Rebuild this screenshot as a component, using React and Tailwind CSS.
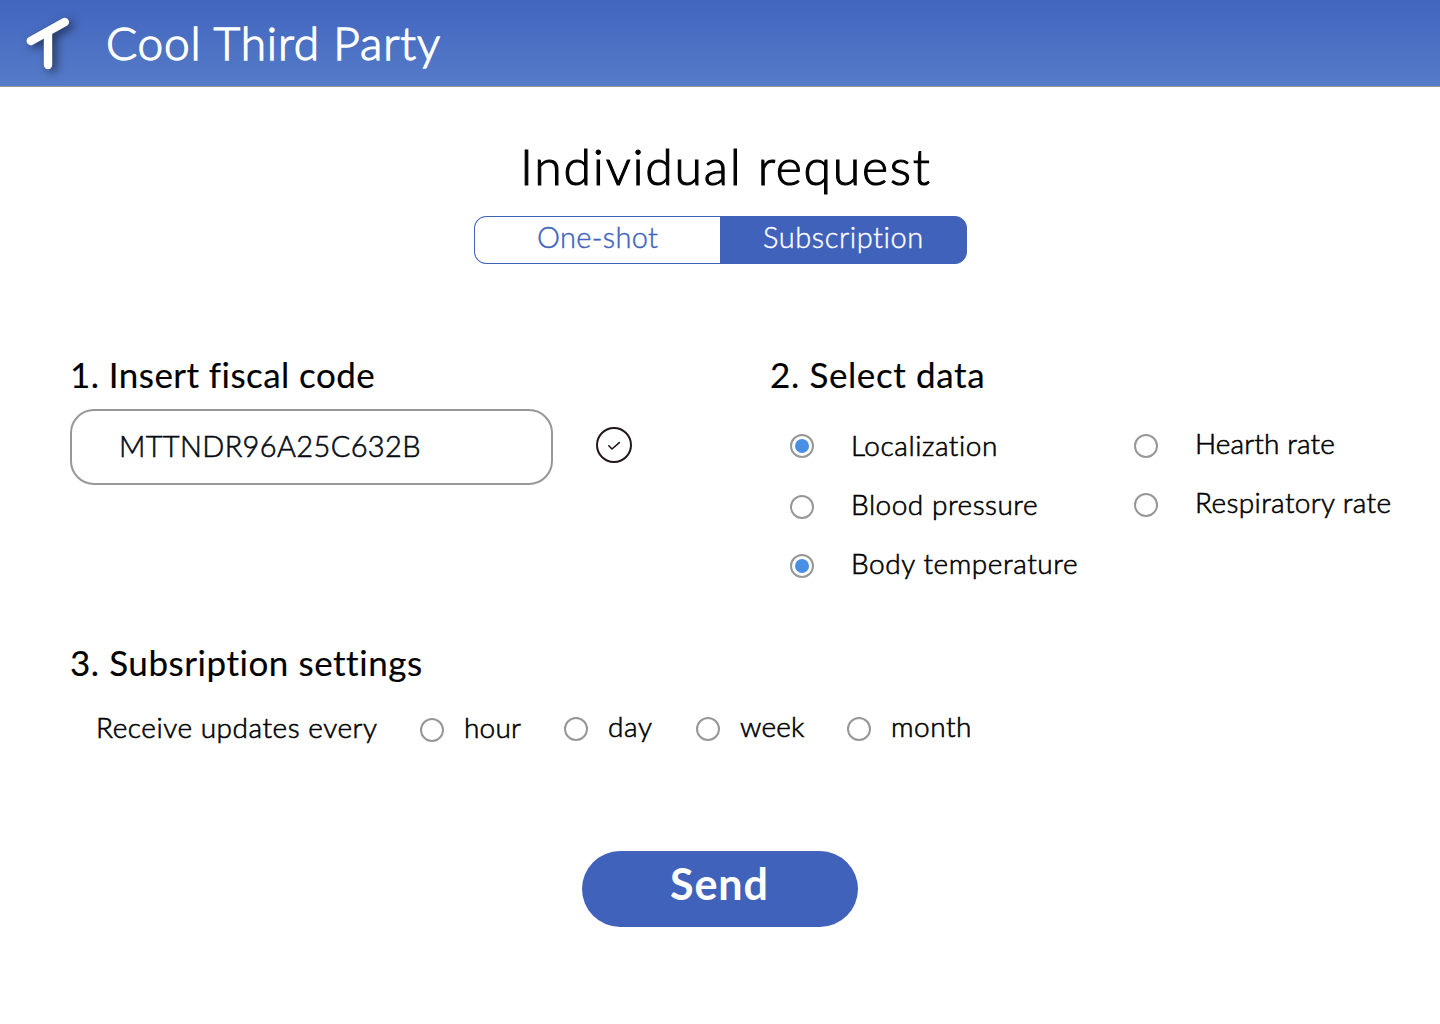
import React from "react";

function Radio({ checked = false, className = "" }) {
  return (
    <span
      role="radio"
      aria-checked={checked}
      className={`flex size-6 shrink-0 items-center justify-center rounded-full border-2 border-[#979797] bg-white ${className}`}
    >
      {checked && <span className="size-[14px] rounded-full bg-[#4a90e2]" />}
    </span>
  );
}

const bodyText =
  "whitespace-nowrap text-[28px] leading-[30px] font-light [-webkit-text-stroke:0.6px_currentColor]";
const headingText =
  "h-[35px] whitespace-nowrap text-[35px] leading-[37px] font-normal [-webkit-text-stroke:0.15px_currentColor]";

const leftOptions = [
  { label: "Localization", checked: true, offset: "mt-1", spacing: "tracking-[0.558px]" },
  { label: "Blood pressure", checked: false, offset: "mt-1.5", spacing: "tracking-[0.515px]" },
  { label: "Body temperature", checked: true, offset: "mt-1.5", spacing: "tracking-[0.579px]" },
];

const rightOptions = [
  { label: "Hearth rate", checked: false, offset: "mt-1.5", spacing: "tracking-[0.14px]" },
  { label: "Respiratory rate", checked: false, offset: "mt-1.5", spacing: "tracking-[0.37px]" },
];

const intervals = [
  { label: "hour", width: "w-[144px]", textOffset: "mt-0", offset: "mt-1.5", spacing: "tracking-[0.196px]" },
  { label: "day", width: "w-[132px]", textOffset: "-mt-px", offset: "mt-[5px]", spacing: "tracking-[0.635px]" },
  { label: "week", width: "w-[151px]", textOffset: "-mt-px", offset: "mt-[5px]", spacing: "tracking-[0.185px]" },
  { label: "month", width: "w-[140px]", textOffset: "-mt-px", offset: "mt-[5px]", spacing: "tracking-[0.506px]" },
];

function OptionList({ options }) {
  return (
    <div>
      {options.map((o) => (
        <div key={o.label} className="flex h-[59px] items-start gap-[37px]">
          <Radio checked={o.checked} className={o.offset} />
          <span className={`${bodyText} ${o.spacing}`}>{o.label}</span>
        </div>
      ))}
    </div>
  );
}

export default function App() {
  return (
    <div className="h-[1024px] w-[1440px] overflow-hidden bg-white font-[Lato,sans-serif] text-black">
      <header className="flex h-[87px] items-start border-b border-[#979797] bg-linear-to-b from-[#4265be] to-[#567bc8]">
        <svg className="h-[86px] w-[106px] shrink-0" viewBox="0 0 106 86" fill="none">
          <g
            stroke="#fff"
            strokeWidth="8.4"
            strokeLinecap="round"
            className="drop-shadow-[4px_3px_5px_rgba(0,0,0,0.55)]"
          >
            <path d="M30.8 41 64.8 22" />
            <path d="M48 34V65" />
          </g>
        </svg>
        <span className="mt-5 text-[46px] leading-[46px] font-light tracking-[0.86px] whitespace-nowrap text-white [-webkit-text-stroke:1.3px_currentColor]">
          Cool Third Party
        </span>
      </header>

      <main>
        <h1 className="mt-[54px] ml-[520px] h-[49px] text-[50px] leading-[50px] font-light tracking-[1.72px] whitespace-nowrap [-webkit-text-stroke:1.1px_currentColor]">
          Individual request
        </h1>

        <div className="mt-[26px] ml-[474px] flex h-12 w-[493px] overflow-hidden rounded-xl border border-[#4062bb] bg-[#4062bb] text-[29px] leading-[29px] font-light [-webkit-text-stroke:0.4px_currentColor]">
          <button className="flex w-[245px] items-start rounded-l-[11px] bg-white pt-[5px] pl-[62px] tracking-[0.337px] text-[#4062bb]">
            One-shot
          </button>
          <button className="flex flex-1 items-start pt-[5px] pl-[43px] tracking-[0.56px] text-white">
            Subscription
          </button>
        </div>

        <div className="mt-[92px] flex pl-[70px]">
          <section className="w-[700px]">
            <h2 className={`${headingText} tracking-[0.44px]`}>1. Insert fiscal code</h2>
            <div className="mt-[18px] flex items-start gap-[43px]">
              <div className="flex h-[76px] w-[483px] items-start rounded-[24px] border-2 border-[#979797] pt-5 pl-[47px] text-[29px] leading-[29px] font-light tracking-[0.36px] text-[#060b14] [-webkit-text-stroke:0.6px_currentColor]">
                MTTNDR96A25C632B
              </div>
              <svg className="mt-[18px] size-9" viewBox="0 0 36 36" fill="none" stroke="#231618">
                <circle cx="18" cy="18" r="17" strokeWidth="2" />
                <path d="M12.8 18.8 16 22 23.3 15.6" strokeWidth="1.6" strokeLinecap="round" strokeLinejoin="round" />
              </svg>
            </div>
          </section>

          <section>
            <h2 className={`${headingText} tracking-[0.62px]`}>2. Select data</h2>
            <div className="mt-[37px] flex items-start pl-5">
              <div className="mt-0.5 w-[344px]">
                <OptionList options={leftOptions} />
              </div>
              <OptionList options={rightOptions} />
            </div>
          </section>
        </div>

        <section className="mt-[37px] pl-[70px]">
          <h2 className={`${headingText} tracking-[0.546px]`}>3. Subsription settings</h2>
          <div className="mt-[33px] flex h-7 items-start pl-[26px]">
            <span className={`${bodyText} w-[324px] tracking-[0.536px]`}>Receive updates every</span>
            {intervals.map((o) => (
              <div key={o.label} className={`flex items-start gap-5 ${o.width}`}>
                <Radio className={o.offset} />
                <span className={`${bodyText} ${o.spacing} ${o.textOffset}`}>{o.label}</span>
              </div>
            ))}
          </div>
        </section>

        <button className="mx-auto mt-[111px] flex h-[76px] w-[276px] items-start rounded-full bg-[#4062bb] pt-[11px] pl-[88px] text-[43px] leading-[43px] font-bold tracking-[0.9px] text-white">
          Send
        </button>
      </main>
    </div>
  );
}
